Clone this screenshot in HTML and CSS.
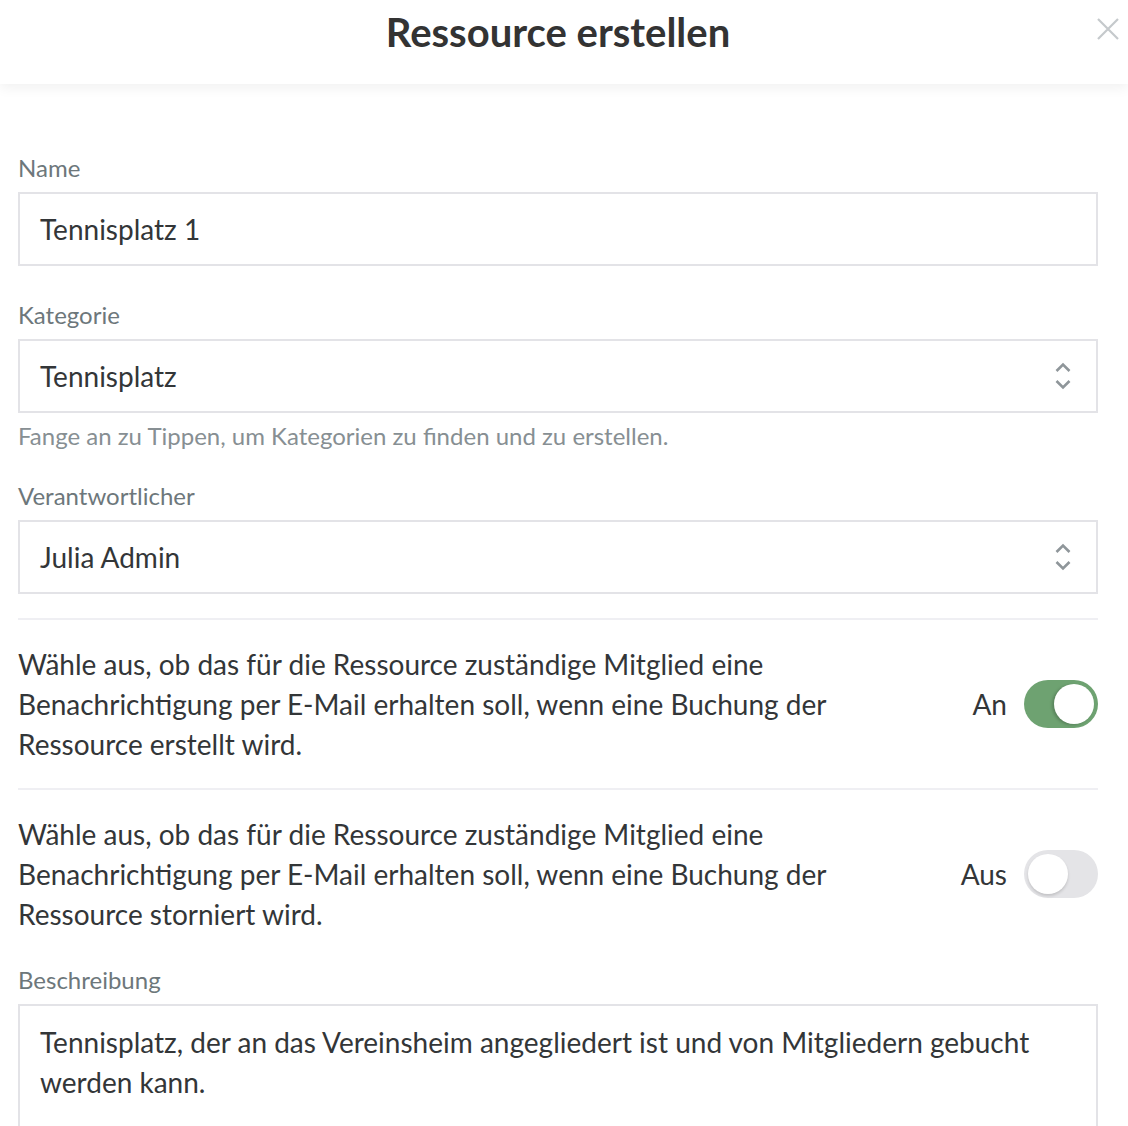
FILE: index.html
```html
<!DOCTYPE html>
<html lang="de">
<head>
	<meta charset="UTF-8">
	<title>Ressource erstellen</title>
	<link rel="stylesheet" href="styles.css">
</head>
<body>
	<header class="modal-head">
		<h1>Ressource erstellen</h1>
		<button class="close" title="Schließen">
			<svg width="24" height="24" viewBox="0 0 24 24"><path d="M2 2 L22 22 M22 2 L2 22" stroke="#c5c9cc" stroke-width="2.2" fill="none"/></svg>
		</button>
	</header>

	<main class="form">
		<div class="field">
			<label>Name</label>
			<div class="input">Tennisplatz 1</div>
		</div>

		<div class="field has-hint">
			<label>Kategorie</label>
			<div class="input select">
				<span>Tennisplatz</span>
				<svg class="updown" width="18" height="32" viewBox="0 0 18 32"><path d="M2.5 11 L9 4.5 L15.5 11 M2.5 21 L9 27.5 L15.5 21" stroke="#8f969a" stroke-width="2.6" fill="none"/></svg>
			</div>
			<p class="hint">Fange an zu Tippen, um Kategorien zu finden und zu erstellen.</p>
		</div>

		<div class="field">
			<label>Verantwortlicher</label>
			<div class="input select">
				<span>Julia Admin</span>
				<svg class="updown" width="18" height="32" viewBox="0 0 18 32"><path d="M2.5 11 L9 4.5 L15.5 11 M2.5 21 L9 27.5 L15.5 21" stroke="#8f969a" stroke-width="2.6" fill="none"/></svg>
			</div>
		</div>

		<div class="switch-row">
			<p>Wähle aus, ob das für die Ressource zuständige Mitglied eine Benachrichtigung per E-Mail erhalten soll, wenn eine Buchung der Ressource erstellt wird.</p>
			<div class="switch-wrap">
				<span>An</span>
				<span class="switch on"><span class="knob"></span></span>
			</div>
		</div>

		<div class="switch-row">
			<p>Wähle aus, ob das für die Ressource zuständige Mitglied eine Benachrichtigung per E-Mail erhalten soll, wenn eine Buchung der Ressource storniert wird.</p>
			<div class="switch-wrap">
				<span>Aus</span>
				<span class="switch"><span class="knob"></span></span>
			</div>
		</div>

		<div class="field desc">
			<label>Beschreibung</label>
			<div class="input area">Tennisplatz, der an das Vereinsheim angegliedert ist und von Mitgliedern gebucht werden kann.</div>
		</div>
	</main>
</body>
</html>
```

FILE: styles.css
```css
body {
	margin: 0;
	background: #fff;
	font-family: Lato, "Open Sans", sans-serif;
	color: #333638;
}

.modal-head {
	position: relative;
	height: 84px;
	padding-right: 12px;
	background: #fff;
	box-shadow: 0 4px 12px rgba(0, 0, 0, 0.06);
	display: flex;
	align-items: center;
	justify-content: center;
}
.modal-head h1 {
	margin: 0 0 20px 0;
	font-size: 40px;
	font-weight: bold;
	color: #333;
	line-height: 48px;
}
.close {
	position: absolute;
	top: 17px;
	right: 8px;
	border: none;
	background: none;
	padding: 0;
	width: 24px;
	height: 24px;
	cursor: pointer;
}
.close svg { display: block; }

.form {
	padding: 69px 30px 0 18px;
}

.field {
	margin-bottom: 34px;
}
.field label {
	display: block;
	font-size: 24px;
	line-height: 30px;
	color: #6d777b;
	margin-bottom: 9px;
}
.input {
	box-sizing: border-box;
	height: 74px;
	border: 2px solid #e3e3e7;
	padding: 0 20px;
	font-size: 28px;
	display: flex;
	align-items: center;
	color: #333638;
}
.select {
	justify-content: space-between;
	padding-right: 24px;
}
.updown { display: block; }

.has-hint { margin-bottom: 30px; }
.hint {
	margin: 8px 0 0 0;
	font-size: 24px;
	line-height: 30px;
	color: #878f93;
}

.field:nth-of-type(3) { margin-bottom: 24px; }

.switch-row {
	border-top: 2px solid #efeff3;
	padding: 24px 0;
	display: flex;
	align-items: center;
	justify-content: space-between;
}
.switch-row + .switch-row { padding-bottom: 31px; }
.switch-row p {
	margin: 0;
	width: 860px;
	font-size: 28px;
	line-height: 40px;
}
.switch-wrap {
	display: flex;
	align-items: center;
	gap: 17px;
	font-size: 28px;
}
.switch {
	position: relative;
	box-sizing: border-box;
	width: 74px;
	height: 48px;
	border-radius: 24px;
	background: #e4e4e7;
	display: block;
}
.switch .knob {
	position: absolute;
	top: 4px;
	left: 4px;
	width: 40px;
	height: 40px;
	border-radius: 50%;
	background: #fff;
	box-shadow: 0 2px 3px rgba(0, 0, 0, 0.15);
}
.switch.on {
	background: #6ea271;
}
.switch.on .knob {
	left: auto;
	right: 4px;
	box-shadow: -2px 1px 3px rgba(0, 0, 0, 0.2);
}

.desc { margin-bottom: 0; }
.area {
	height: 160px;
	align-items: flex-start;
	padding-top: 16px;
	line-height: 40px;
	border-bottom: none;
}
```
